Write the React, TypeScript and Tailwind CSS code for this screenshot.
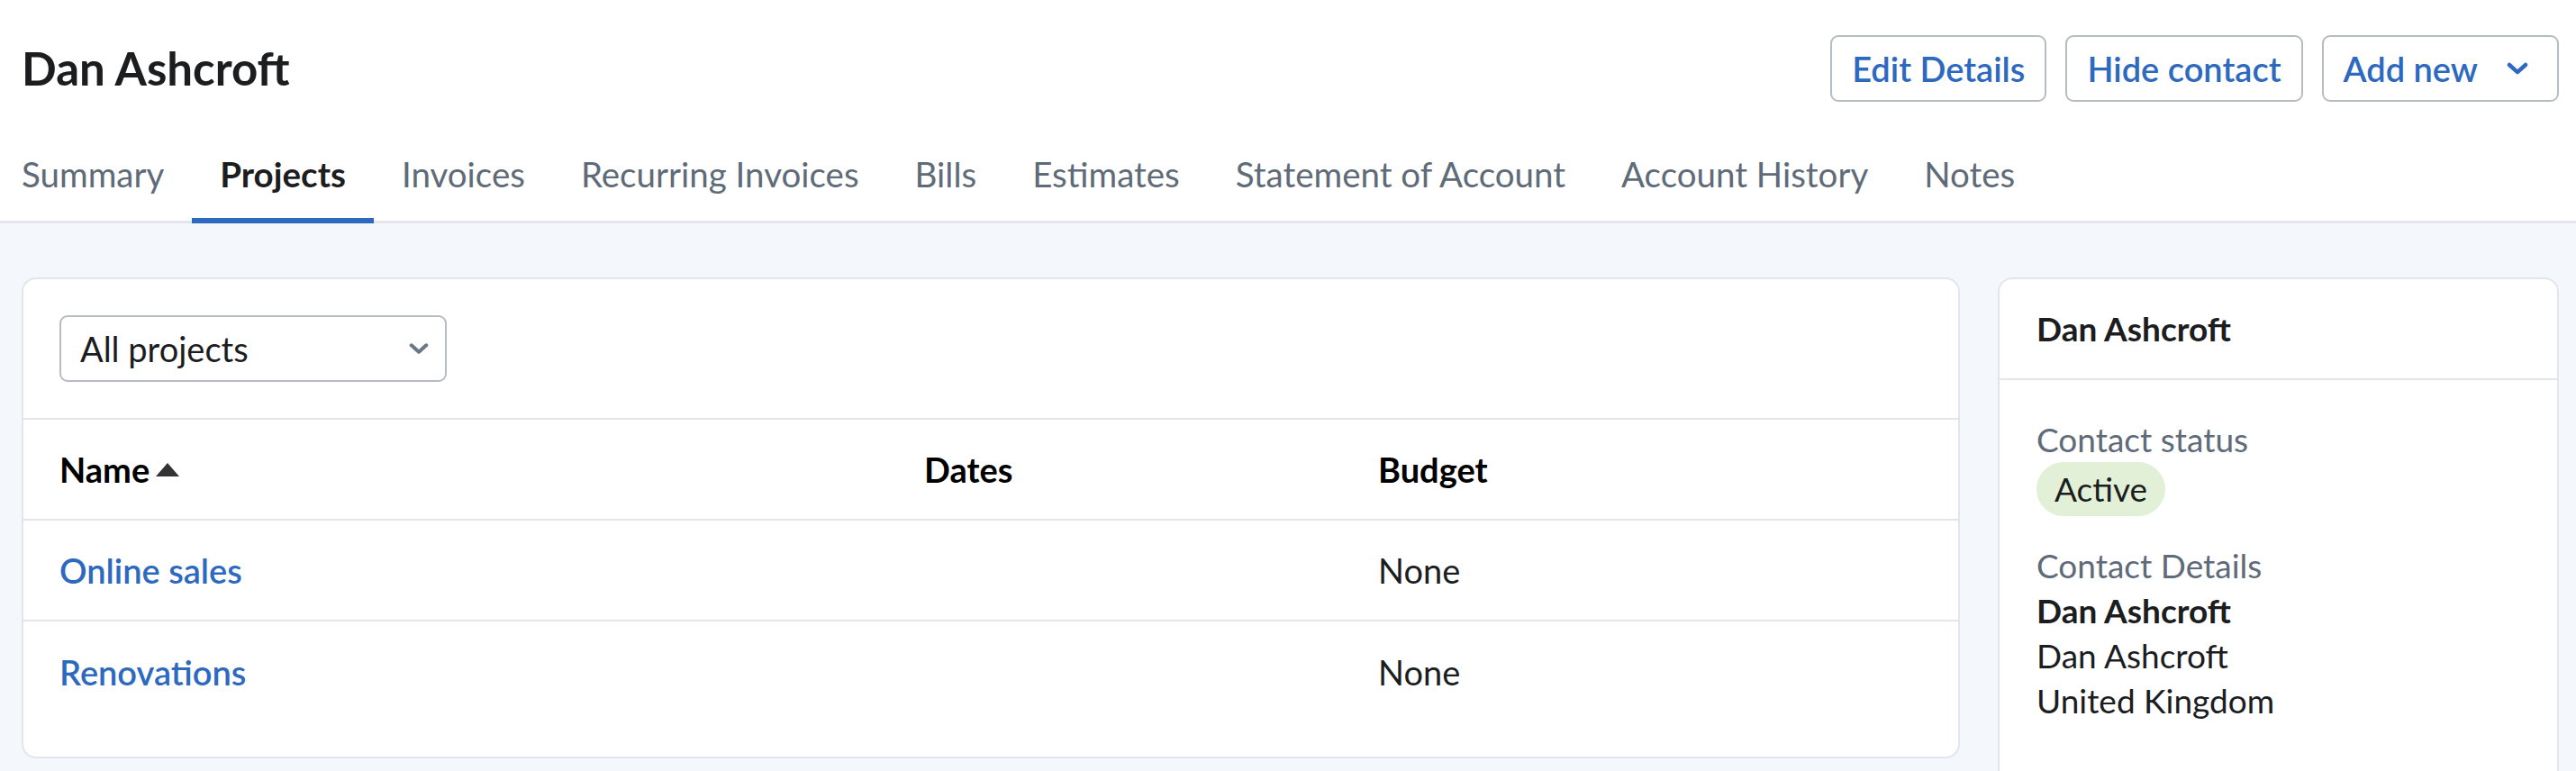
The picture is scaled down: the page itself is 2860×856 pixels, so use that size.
import React from "react";

const tabs = [
  "Summary",
  "Projects",
  "Invoices",
  "Recurring Invoices",
  "Bills",
  "Estimates",
  "Statement of Account",
  "Account History",
  "Notes",
];

const projects = [
  { name: "Online sales", dates: "", budget: "None" },
  { name: "Renovations", dates: "", budget: "None" },
];

function Chevron({ className }: { className?: string }) {
  return (
    <svg viewBox="0 0 24 14" className={className} fill="none" stroke="currentColor" strokeWidth="4.5" strokeLinecap="round" strokeLinejoin="round">
      <polyline points="3,3 12,11 21,3" />
    </svg>
  );
}

export default function App() {
  return (
    <div className="min-h-screen bg-[#f4f7fc] text-[#1c1d1f]" style={{ fontFamily: "Lato, 'Noto Sans', sans-serif" }}>
      <div className="bg-white">
        <div className="flex items-center justify-between pl-[24px] pr-[19px] pt-[39px]">
          <h1 className="text-[51px] font-bold leading-[74px] text-[#1c1d1f]">Dan Ashcroft</h1>
          <div className="flex items-center gap-[21px]">
            <button className="h-[74px] px-[22px] border-2 border-[#b7bcc3] rounded-[9px] text-[38px] font-semibold text-[#2d6abf]">
              Edit Details
            </button>
            <button className="h-[74px] px-[22px] border-2 border-[#b7bcc3] rounded-[9px] text-[38px] font-semibold text-[#2d6abf]">
              Hide contact
            </button>
            <button className="h-[74px] pl-[22px] pr-[32px] border-2 border-[#b7bcc3] rounded-[9px] text-[38px] font-semibold text-[#2d6abf] flex items-center gap-[32px]">
              Add new
              <Chevron className="w-[24px] h-[14px]" />
            </button>
          </div>
        </div>
        <nav className="flex pl-[24px] mt-[56px] border-b-[3px] border-[#e3e6ec]">
          {tabs.map((t) => (
            <a
              key={t}
              className={
                t === "Projects"
                  ? "px-[31px] first:pl-0 pb-[25px] -mb-[3px] border-b-[6px] border-[#2d6abf] text-[38.5px] leading-[48px] font-bold text-[#1c1d1f]"
                  : "px-[31px] first:pl-0 pb-[25px] -mb-[3px] border-b-[6px] border-transparent text-[38.5px] leading-[48px] text-[#5f6b78]"
              }
            >
              {t}
            </a>
          ))}
        </nav>
      </div>

      <div className="flex items-start gap-[42px] pl-[24px] pr-[19px] pt-[60px]">
        <div className="flex-1 bg-white border-2 border-[#e2e5eb] rounded-[16px] pb-[38px]">
          <div className="px-[40px] py-[40px] border-b-2 border-[#e3e5ea]">
            <div className="w-[430px] h-[74px] border-2 border-[#b7bcc3] rounded-[9px] flex items-center justify-between pl-[21px] pr-[18px]">
              <span className="text-[38px] text-[#1c1d1f]">All projects</span>
              <Chevron className="w-[22px] h-[14px] text-[#6b7785]" />
            </div>
          </div>
          <div className="grid grid-cols-[960px_504px_1fr] px-[40px] h-[112px] items-center border-b-2 border-[#e3e5ea] text-[38px] font-bold text-black">
            <div className="flex items-center gap-[7px]">
              Name
              <svg viewBox="0 0 26 15" className="w-[26px] h-[15px]">
                <polygon points="13,0 26,15 0,15" fill="#333333" />
              </svg>
            </div>
            <div>Dates</div>
            <div>Budget</div>
          </div>
          {projects.map((p, i) => (
            <div
              key={p.name}
              className={
                i < projects.length - 1
                  ? "grid grid-cols-[960px_504px_1fr] px-[40px] h-[112px] items-center border-b-2 border-[#e3e5ea] text-[38px]"
                  : "grid grid-cols-[960px_504px_1fr] px-[40px] h-[112px] items-center text-[38px]"
              }
            >
              <a className="font-semibold text-[#2d6abf]">{p.name}</a>
              <div>{p.dates}</div>
              <div className="text-[#1c1d1f]">{p.budget}</div>
            </div>
          ))}
        </div>

        <div className="w-[623px] bg-white border-2 border-[#e2e5eb] rounded-[16px]">
          <div className="h-[112px] px-[41px] flex items-center border-b-2 border-[#e3e5ea] text-[37px] font-bold">
            Dan Ashcroft
          </div>
          <div className="px-[41px] pt-[41px] pb-[80px] text-[37px] leading-[50px]">
            <div className="text-[#5f6b78]">Contact status</div>
            <span className="inline-block rounded-full bg-[#e1f0d7] px-[20px] leading-[60px]">Active</span>
            <div className="mt-[30px] text-[#5f6b78]">Contact Details</div>
            <div className="font-bold">Dan Ashcroft</div>
            <div>Dan Ashcroft</div>
            <div>United Kingdom</div>
          </div>
        </div>
      </div>
    </div>
  );
}
